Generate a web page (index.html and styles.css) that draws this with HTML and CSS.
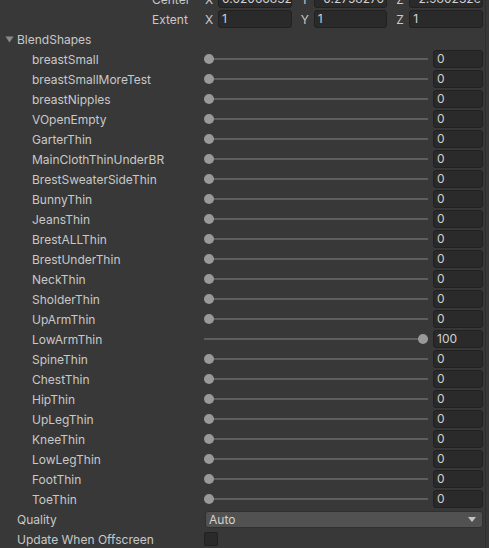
FILE: index.html
```html
<!DOCTYPE html>
<html>
<head>
<meta charset="utf-8">
<link rel="stylesheet" href="styles.css">
</head>
<body>
<div class="panel">
  <div class="row">
    <div class="label label-bounds">Center</div>
    <div class="vec">
      <div class="comp"><span class="axis">X</span><div class="field">0.02066832</div></div>
      <div class="comp"><span class="axis">Y</span><div class="field">-0.2758276</div></div>
      <div class="comp"><span class="axis">Z</span><div class="field">-2.980232e-08</div></div>
    </div>
  </div>
  <div class="row">
    <div class="label label-bounds">Extent</div>
    <div class="vec">
      <div class="comp"><span class="axis">X</span><div class="field">1</div></div>
      <div class="comp"><span class="axis">Y</span><div class="field">1</div></div>
      <div class="comp"><span class="axis">Z</span><div class="field">1</div></div>
    </div>
  </div>
  <div class="row">
    <div class="label label-fold">
      <svg class="fold" width="9" height="8" viewBox="0 0 9 8"><path d="M0.5 1.5 H8.5 L4.5 7.5 Z" fill="#8a8a8a"/></svg>
      BlendShapes
    </div>
  </div>
  <div id="shapes"></div>
  <div class="row">
    <div class="label label-top">Quality</div>
    <div class="control">
      <div class="dropdown"><span>Auto</span>
        <svg width="8" height="5" viewBox="0 0 8 5"><path d="M0 0 H8 L4 5 Z" fill="#c4c4c4"/></svg>
      </div>
    </div>
  </div>
  <div class="row">
    <div class="label label-top">Update When Offscreen</div>
    <div class="control"><div class="checkbox"></div></div>
  </div>
</div>
<script src="app.js"></script>
</body>
</html>
```
FILE: app.js
```js
const shapes = [
  ["breastSmall",0],["breastSmallMoreTest",0],["breastNipples",0],["VOpenEmpty",0],
  ["GarterThin",0],["MainClothThinUnderBR",0],["BrestSweaterSideThin",0],["BunnyThin",0],
  ["JeansThin",0],["BrestALLThin",0],["BrestUnderThin",0],["NeckThin",0],["SholderThin",0],
  ["UpArmThin",0],["LowArmThin",100],["SpineThin",0],["ChestThin",0],["HipThin",0],
  ["UpLegThin",0],["KneeThin",0],["LowLegThin",0],["FootThin",0],["ToeThin",0]
];
const host = document.getElementById("shapes");
for (const [name, v] of shapes) {
  const row = document.createElement("div");
  row.className = "row";
  row.innerHTML =
    '<div class="label label-shape">' + name + '</div>' +
    '<div class="control slider">' +
      '<div class="track"><div class="rail"></div>' +
        '<div class="thumb" style="--v:' + v + '"></div></div>' +
      '<div class="field num">' + v + '</div>' +
    '</div>';
  host.appendChild(row);
}
```
FILE: styles.css
```css
html, body {
  margin: 0;
  padding: 0;
  background: #383838;
  overflow: hidden;
}
.panel {
  width: 485px;
  min-height: 570px;
  border-right: 1px solid #2e2e2e;
  font-family: Inter, "Noto Sans", sans-serif;
  font-size: 12px;
  color: #c8c8c8;
  margin-top: -11px;
}
.row {
  height: 20px;
  display: flex;
  align-items: center;
}
.label {
  width: 204px;
  flex: none;
  white-space: nowrap;
  box-sizing: border-box;
}
.label-bounds { padding-left: 152px; }
.label-fold { padding-left: 5px; display: flex; align-items: center; }
.fold { margin-right: 3px; }
.label-top { padding-left: 17px; }
.label-shape { padding-left: 32px; }
.vec {
  width: 279px;
  display: flex;
  gap: 8px;
}
.comp {
  flex: 1;
  display: flex;
  align-items: center;
  min-width: 0;
}
.axis {
  width: 14px;
  flex: none;
  padding-left: 1px;
  box-sizing: border-box;
}
.field {
  flex: 1;
  min-width: 0;
  height: 18px;
  box-sizing: border-box;
  background: #2a2a2a;
  border: 1px solid #212121;
  border-radius: 3px;
  color: #d2d2d2;
  padding-left: 3px;
  line-height: 16px;
  white-space: nowrap;
  overflow: hidden;
}
.control {
  width: 279px;
  display: flex;
  align-items: center;
}
.slider { gap: 5px; }
.track {
  position: relative;
  width: 224px;
  height: 10px;
  flex: none;
}
.rail {
  position: absolute;
  left: 0;
  right: 0;
  top: 4px;
  height: 2px;
  background: #5e5e5e;
}
.thumb {
  position: absolute;
  top: 0;
  left: calc(var(--v, 0) * 2.14px);
  width: 10px;
  height: 10px;
  border-radius: 50%;
  background: #999999;
}
.num {
  flex: none;
  width: 50px;
}
.dropdown {
  width: 278px;
  height: 17px;
  box-sizing: border-box;
  background: #515151;
  border: 1px solid #303030;
  border-radius: 3px;
  display: flex;
  align-items: center;
  justify-content: space-between;
  padding: 0 6px 0 3px;
  color: #d2d2d2;
  margin-left: 1px;
}
.checkbox {
  width: 14px;
  height: 14px;
  box-sizing: border-box;
  background: #2a2a2a;
  border: 1px solid #212121;
  border-radius: 2px;
}
```
